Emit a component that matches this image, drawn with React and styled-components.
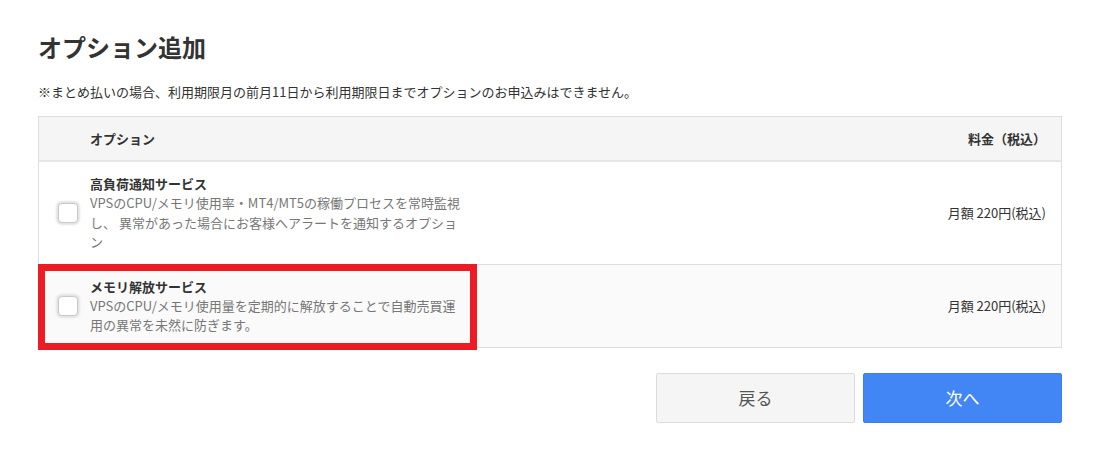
import React from 'react';
import styled, { createGlobalStyle } from 'styled-components';

const GlobalStyle = createGlobalStyle`
  body {
    margin: 0;
    background: #fff;
    font-family: "Noto Sans CJK JP", "Noto Sans", sans-serif;
    color: #333;
  }
`

const Page = styled.div`
  padding: 31px 38px 0 38px;
  width: 1024px;
`
const Title = styled.h2`
  font-size: 24px;
  font-weight: 700;
  line-height: 32px;
  margin: 0;
  color: #333;
`
const Note = styled.p`
  font-size: 13px;
  line-height: 18px;
  margin: 20px 0 0 0;
  color: #333;
`
const Table = styled.div`
  margin-top: 15px;
  border: 1px solid #dedede;
`
const Row = styled.div`
  position: relative;
  display: flex;
  align-items: center;
  padding: ${({head}) => head ? '0 15px 0 17px' : '12px 15px 12px 17px'};
  min-height: ${({head}) => head ? '43px' : 'auto'};
  background: ${({bg}) => bg || '#fff'};
  border-bottom: ${({last}) => last ? 'none' : '1px solid #dedede'};
  ${({head}) => head && 'border-bottom: 2px solid #e6e6e6;'}
`
const HeadLabel = styled.div`
  font-size: 13px;
  font-weight: 700;
  color: #333;
  margin-left: 34px;
  flex: 1;
`
const HeadPrice = styled.div`
  font-size: 13px;
  font-weight: 700;
  color: #333;
`
const Check = styled.span`
  width: 20px;
  height: 20px;
  margin: 2px;
  box-sizing: border-box;
  border: 1px solid #c8c8c8;
  border-radius: 4px;
  background: #fff;
  box-shadow: 0 0 2px 2px #e3e3e3;
  flex: none;
`
const Info = styled.div`
  margin-left: 10px;
  flex: 1;
`
const ItemName = styled.div`
  font-size: 13px;
  font-weight: 700;
  line-height: 19px;
  color: #333;
`
const Desc = styled.div`
  font-size: 13px;
  line-height: 19.5px;
  color: #777;
  white-space: nowrap;
`
const Price = styled.div`
  font-size: 13px;
  color: #333;
`
const Highlight = styled.div`
  position: absolute;
  left: -1px;
  top: -1px;
  width: 439px;
  height: 86px;
  box-sizing: border-box;
  border: 7px solid #ed1c24;
  pointer-events: none;
`
const Actions = styled.div`
  display: flex;
  justify-content: flex-end;
  gap: 8px;
  margin-top: 25px;
`
const Button = styled.button`
  width: 199px;
  height: 50px;
  box-sizing: border-box;
  border-radius: 2px;
  font-family: inherit;
  font-size: 17px;
  border: 1px solid ${({primary}) => primary ? '#3b7eee' : '#dcdcdc'};
  background: ${({primary}) => primary ? '#4285f4' : '#f5f5f5'};
  color: ${({primary}) => primary ? '#fff' : '#555'};
`

const options = [
  {
    name: '高負荷通知サービス',
    lines: [
      'VPSのCPU/メモリ使用率・MT4/MT5の稼働プロセスを常時監視',
      'し、 異常があった場合にお客様へアラートを通知するオプショ',
      'ン',
    ],
    price: '月額 220円(税込)',
  },
  {
    name: 'メモリ解放サービス',
    lines: [
      'VPSのCPU/メモリ使用量を定期的に解放することで自動売買運',
      '用の異常を未然に防ぎます。',
    ],
    price: '月額 220円(税込)',
    marked: true,
  },
]

export default function App() {
  return (
    <>
      <GlobalStyle />
      <Page>
        <Title>オプション追加</Title>
        <Note>※まとめ払いの場合、利用期限月の前月11日から利用期限日までオプションのお申込みはできません。</Note>
        <Table>
          <Row head bg="#f5f5f5">
            <HeadLabel>オプション</HeadLabel>
            <HeadPrice>料金（税込）</HeadPrice>
          </Row>
          {options.map((o, i) => (
            <Row key={i} bg={i % 2 ? '#fafafa' : '#fff'} last={i === options.length - 1}>
              <Check />
              <Info>
                <ItemName>{o.name}</ItemName>
                {o.lines.map((l, j) => <Desc key={j}>{l}</Desc>)}
              </Info>
              <Price>{o.price}</Price>
              {o.marked && <Highlight />}
            </Row>
          ))}
        </Table>
        <Actions>
          <Button>戻る</Button>
          <Button primary>次へ</Button>
        </Actions>
      </Page>
    </>
  );
}
